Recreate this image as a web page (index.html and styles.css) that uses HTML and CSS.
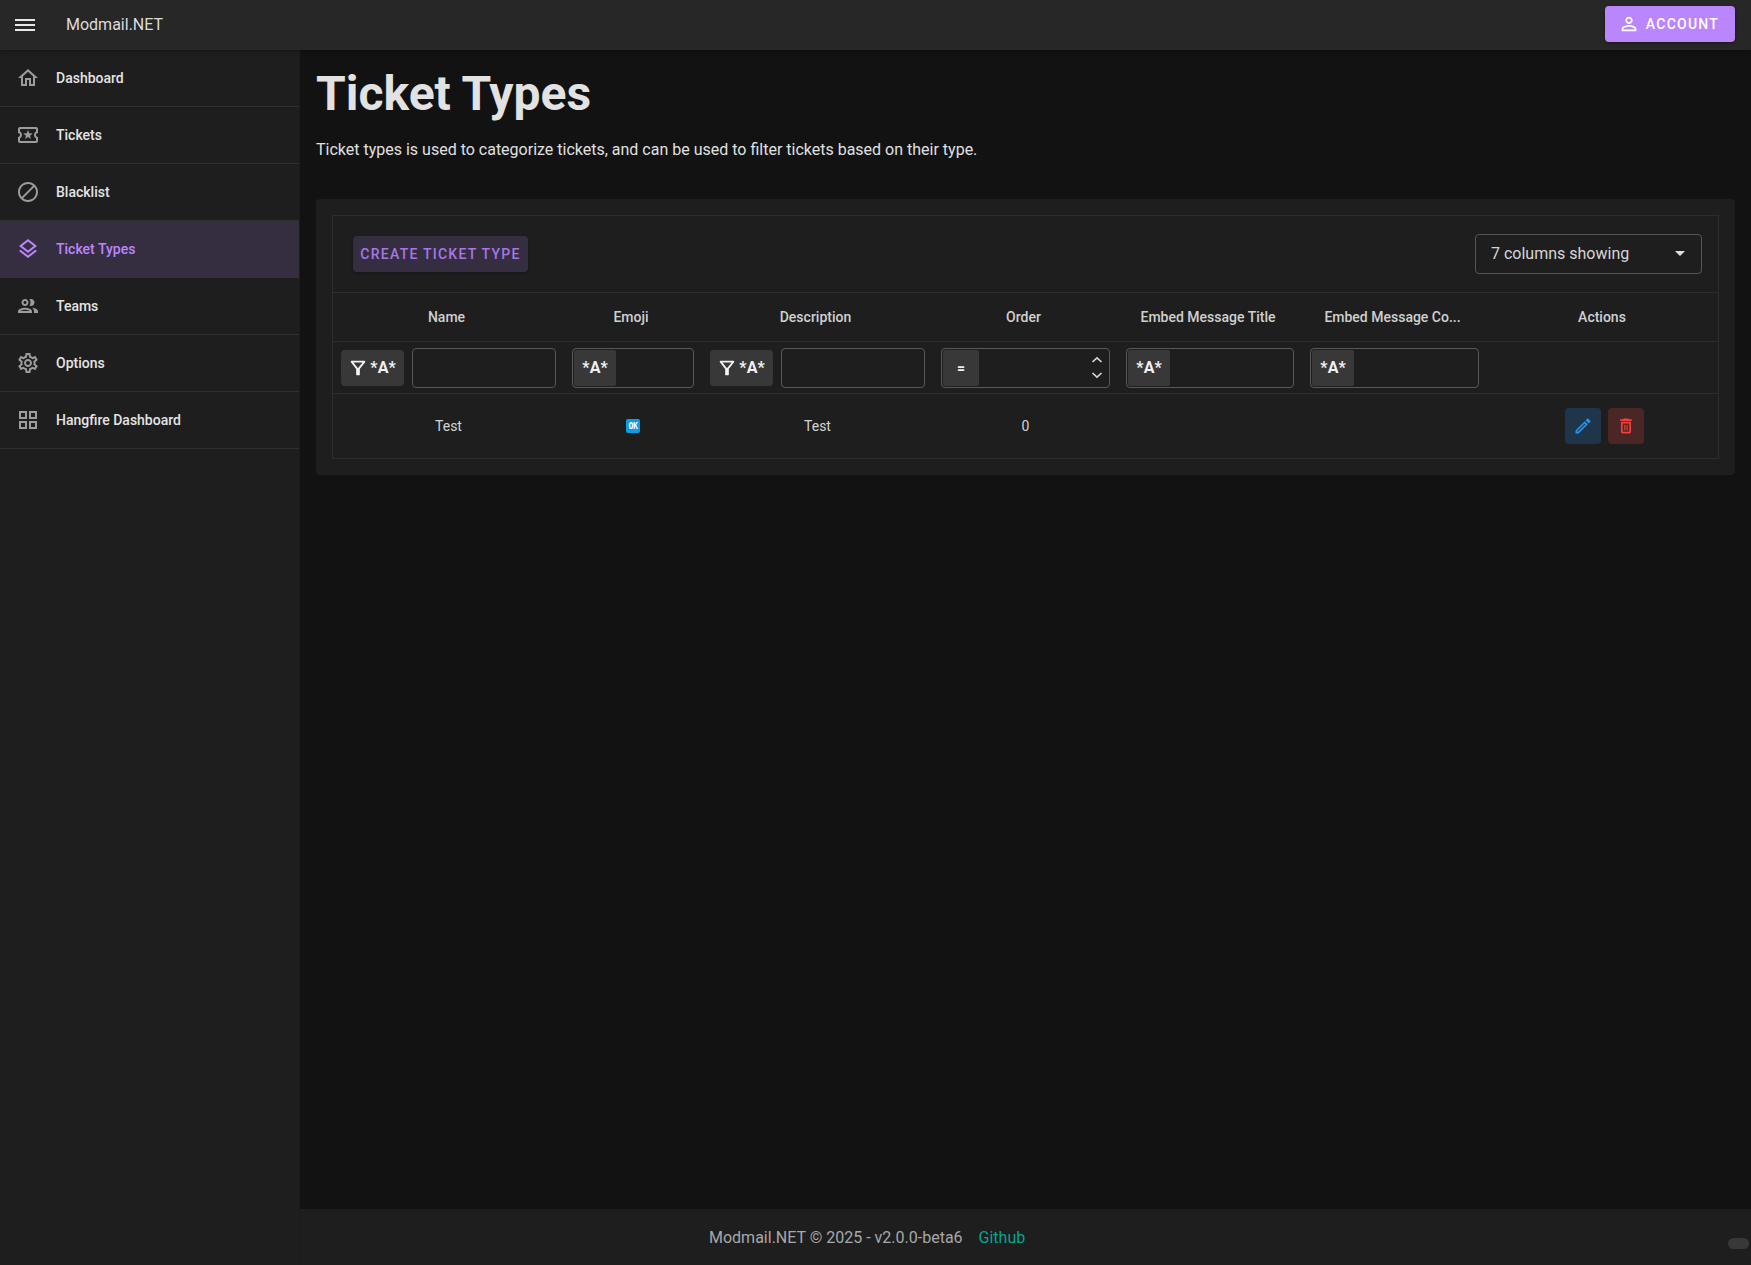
FILE: index.html
```html
<!DOCTYPE html>
<html lang="en">
<head>
<meta charset="utf-8">
<title>Ticket Types - Modmail.NET</title>
<link rel="stylesheet" href="styles.css">
</head>
<body>
<header class="appbar">
  <svg class="menu-icon" viewBox="0 0 20 12" aria-hidden="true"><path d="M0 0h20v2H0zM0 5h20v2H0zM0 10h20v2H0z"/></svg>
  <span class="brand">Modmail.NET</span>
  <a class="account-btn">
    <svg class="account-icon" viewBox="0 0 24 24"><path d="M12 5.9c1.16 0 2.1.94 2.1 2.1s-.94 2.1-2.1 2.1S9.9 9.16 9.9 8s.94-2.1 2.1-2.1m0 9c2.97 0 6.1 1.46 6.1 2.1v1.1H5.9V17c0-.64 3.13-2.1 6.1-2.1M12 4C9.79 4 8 5.79 8 8s1.79 4 4 4 4-1.79 4-4-1.79-4-4-4zm0 9c-2.67 0-8 1.34-8 4v3h16v-3c0-2.66-5.33-4-8-4z"/></svg>
    Account
  </a>
</header>
<div class="shell">
  <nav class="sidebar">
    <a class="nav-item"><svg class="nav-icon" viewBox="0 0 24 24"><path d="M12 5.69l5 4.5V18h-2v-6H9v6H7v-7.81l5-4.5M12 3L2 12h3v8h6v-6h2v6h6v-8h3L12 3z"/></svg>Dashboard</a>
    <a class="nav-item"><svg class="nav-icon" viewBox="0 0 24 24"><path d="M22 10V6c0-1.11-.9-2-2-2H4c-1.1 0-1.99.89-1.99 2v4c1.1 0 1.99.9 1.99 2s-.89 2-2 2v4c0 1.1.9 2 2 2h16c1.1 0 2-.9 2-2v-4c-1.1 0-2-.9-2-2s.9-2 2-2zm-2-1.46c-1.19.69-2 1.99-2 3.46s.81 2.77 2 3.46V18H4v-2.54c1.19-.69 2-1.99 2-3.46 0-1.48-.8-2.77-1.99-3.46L4 6h16v2.54zM9.07 16L12 14.12 14.93 16l-.89-3.36 2.69-2.2-3.47-.21L12 7l-1.27 3.22-3.47.21 2.69 2.2z"/></svg>Tickets</a>
    <a class="nav-item"><svg class="nav-icon" viewBox="0 0 24 24"><path d="M12 2C6.48 2 2 6.48 2 12s4.48 10 10 10 10-4.48 10-10S17.52 2 12 2zM4 12c0-4.42 3.58-8 8-8 1.85 0 3.55.63 4.9 1.69L5.69 16.9C4.63 15.55 4 13.85 4 12zm8 8c-1.85 0-3.55-.63-4.9-1.69L18.31 7.1C19.37 8.45 20 10.15 20 12c0 4.42-3.58 8-8 8z"/></svg>Blacklist</a>
    <a class="nav-item nav-item-active"><svg class="nav-icon" viewBox="0 0 24 24"><path d="M11.99 18.54l-7.37-5.73L3 14.07l9 7 9-7-1.63-1.27zM12 16l7.36-5.73L21 9l-9-7-9 7 1.63 1.27L12 16zm0-11.47L17.74 9 12 13.47 6.26 9 12 4.53z"/></svg>Ticket Types</a>
    <a class="nav-item"><svg class="nav-icon" viewBox="0 0 24 24"><path d="M9 13.75c-2.34 0-7 1.17-7 3.5V19h14v-1.75c0-2.33-4.66-3.5-7-3.5zM4.34 17c.84-.58 2.87-1.25 4.66-1.25s3.82.67 4.66 1.25H4.34zM9 12c1.93 0 3.5-1.57 3.5-3.5S10.93 5 9 5 5.5 6.57 5.5 8.5 7.07 12 9 12zm0-5c.83 0 1.5.67 1.5 1.5S9.83 10 9 10s-1.5-.67-1.5-1.5S8.17 7 9 7zm7.04 6.81c1.16.84 1.96 1.96 1.96 3.44V19h4v-1.75c0-2.02-3.5-3.17-5.96-3.44zM15 12c1.93 0 3.5-1.57 3.5-3.5S16.93 5 15 5c-.54 0-1.04.13-1.5.35.63.89 1 1.98 1 3.15s-.37 2.26-1 3.15c.46.22.96.35 1.5.35z"/></svg>Teams</a>
    <a class="nav-item"><svg class="nav-icon" viewBox="0 0 24 24"><path d="M19.43 12.98c.04-.32.07-.64.07-.98 0-.34-.03-.66-.07-.98l2.11-1.65c.19-.15.24-.42.12-.64l-2-3.46c-.09-.16-.26-.25-.44-.25-.06 0-.12.01-.17.03l-2.49 1c-.52-.4-1.08-.73-1.69-.98l-.38-2.65C14.46 2.18 14.25 2 14 2h-4c-.25 0-.46.18-.49.42l-.38 2.65c-.61.25-1.17.59-1.69.98l-2.49-1c-.06-.02-.12-.03-.18-.03-.17 0-.34.09-.43.25l-2 3.46c-.13.22-.07.49.12.64l2.11 1.65c-.04.32-.07.65-.07.98 0 .33.03.66.07.98l-2.11 1.65c-.19.15-.24.42-.12.64l2 3.46c.09.16.26.25.44.25.06 0 .12-.01.17-.03l2.49-1c.52.4 1.08.73 1.69.98l.38 2.65c.03.24.24.42.49.42h4c.25 0 .46-.18.49-.42l.38-2.65c.61-.25 1.17-.59 1.69-.98l2.49 1c.06.02.12.03.18.03.17 0 .34-.09.43-.25l2-3.46c.12-.22.07-.49-.12-.64l-2.11-1.65zm-1.98-1.71c.04.31.05.52.05.73 0 .21-.02.43-.05.73l-.14 1.13.89.7 1.08.84-.7 1.21-1.27-.51-1.04-.42-.9.68c-.43.32-.84.56-1.25.73l-1.06.43-.16 1.13-.2 1.35h-1.4l-.19-1.35-.16-1.13-1.06-.43c-.43-.18-.83-.41-1.23-.71l-.91-.7-1.06.43-1.27.51-.7-1.21 1.08-.84.89-.7-.14-1.13c-.03-.31-.05-.54-.05-.74s.02-.43.05-.73l.14-1.13-.89-.7-1.08-.84.7-1.21 1.27.51 1.04.42.9-.68c.43-.32.84-.56 1.25-.73l1.06-.43.16-1.13.2-1.35h1.39l.19 1.35.16 1.13 1.06.43c.43.18.83.41 1.23.71l.91.7 1.06-.43 1.27-.51.7 1.21-1.07.85-.89.7.14 1.13zM12 8c-2.21 0-4 1.79-4 4s1.79 4 4 4 4-1.79 4-4-1.79-4-4-4zm0 6c-1.1 0-2-.9-2-2s.9-2 2-2 2 .9 2 2-.9 2-2 2z"/></svg>Options</a>
    <a class="nav-item"><svg class="nav-icon" viewBox="0 0 24 24"><path d="M3 3v8h8V3H3zm6 6H5V5h4v4zm-6 4v8h8v-8H3zm6 6H5v-4h4v4zm4-16v8h8V3h-8zm6 6h-4V5h4v4zm-6 4v8h8v-8h-8zm6 6h-4v-4h4v4z"/></svg>Hangfire Dashboard</a>
  </nav>
  <div class="main">
    <main class="content">
      <h1 class="page-title">Ticket Types</h1>
      <p class="page-lead">Ticket types is used to categorize tickets, and can be used to filter tickets based on their type.</p>
      <section class="card">
        <div class="grid">
          <div class="toolbar">
            <button class="create-btn">Create Ticket Type</button>
            <div class="column-select">7 columns showing<span class="caret"></span></div>
          </div>
          <div class="row row-head">
            <div class="th">Name</div>
            <div class="th">Emoji</div>
            <div class="th">Description</div>
            <div class="th">Order</div>
            <div class="th">Embed Message Title</div>
            <div class="th">Embed Message Co...</div>
            <div class="th th-actions">Actions</div>
          </div>
          <div class="row row-filter">
            <div class="fc">
              <span class="filter-btn"><svg class="funnel" viewBox="0 0 24 24"><path fill-rule="evenodd" d="M7,6h10l-5.01,6.3L7,6z M4.25,5.61C6.27,8.2,10,13,10,13v6c0,.55.45,1,1,1h2c.55,0,1-.45,1-1v-6c0,0,3.72-4.8,5.75-7.39C20.26,4.95,19.79,4,18.95,4H5.04C4.21,4,3.74,4.95,4.25,5.61z"/></svg>*A*</span>
              <span class="field"></span>
            </div>
            <div class="fc"><span class="field"><span class="adorn">*A*</span></span></div>
            <div class="fc">
              <span class="filter-btn"><svg class="funnel" viewBox="0 0 24 24"><path fill-rule="evenodd" d="M7,6h10l-5.01,6.3L7,6z M4.25,5.61C6.27,8.2,10,13,10,13v6c0,.55.45,1,1,1h2c.55,0,1-.45,1-1v-6c0,0,3.72-4.8,5.75-7.39C20.26,4.95,19.79,4,18.95,4H5.04C4.21,4,3.74,4.95,4.25,5.61z"/></svg>*A*</span>
              <span class="field"></span>
            </div>
            <div class="fc">
              <span class="field">
                <span class="adorn adorn-eq">=</span>
                <span class="spin">
                  <svg viewBox="0 0 12 8"><path d="M1.5 6L6 1.8 10.5 6" /></svg>
                  <svg viewBox="0 0 12 8"><path d="M1.5 2L6 6.2 10.5 2" /></svg>
                </span>
              </span>
            </div>
            <div class="fc"><span class="field"><span class="adorn">*A*</span></span></div>
            <div class="fc"><span class="field"><span class="adorn">*A*</span></span></div>
            <div class="fc"></div>
          </div>
          <div class="row row-data">
            <div class="td">Test</div>
            <div class="td"><span class="emoji-ok">OK</span></div>
            <div class="td">Test</div>
            <div class="td">0</div>
            <div class="td"></div>
            <div class="td"></div>
            <div class="td td-actions">
              <button class="icon-btn icon-btn-edit"><svg viewBox="0 0 24 24"><path d="M14.06 9.02l.92.92L5.92 19H5v-.92l9.06-9.06M17.66 3c-.25 0-.51.1-.7.29l-1.83 1.83 3.75 3.75 1.83-1.83c.39-.39.39-1.02 0-1.41l-2.34-2.34c-.2-.2-.45-.29-.71-.29zm-3.6 3.19L3 17.25V21h3.75L17.81 9.94l-3.75-3.75z"/></svg></button>
              <button class="icon-btn icon-btn-delete"><svg viewBox="0 0 24 24"><path d="M6 19c0 1.1.9 2 2 2h8c1.1 0 2-.9 2-2V7H6v12zM8 9h8v10H8V9zm7.5-5l-1-1h-5l-1 1H5v2h14V4h-3.5zM10 10.5h1.3v7H10zM12.7 10.5H14v7h-1.3z"/></svg></button>
            </div>
          </div>
        </div>
      </section>
    </main>
    <footer class="footer">
      <span>Modmail.NET © 2025 - v2.0.0-beta6</span>
      <a class="footer-link">Github</a>
    </footer>
  </div>
</div>
<span class="corner-pill"></span>
</body>
</html>
```

FILE: styles.css
```css
* { box-sizing: border-box; }

html, body {
  margin: 0;
  height: 100%;
}

body {
  display: flex;
  flex-direction: column;
  height: 1265px;
  overflow: hidden;
  background: #121212;
  color: #e0e0e0;
  font-family: Roboto, "Liberation Sans", sans-serif;
  font-size: 14px;
}

/* App bar */
.appbar {
  position: relative;
  z-index: 2;
  flex: 0 0 50px;
  display: flex;
  align-items: center;
  padding: 0 16px 0 15px;
  background: #272727;
  box-shadow: 0 1px 4px rgba(0, 0, 0, 0.35);
}

.menu-icon {
  width: 20px;
  height: 12px;
  fill: #e8e8e8;
}

.brand {
  margin-left: 31px;
  margin-top: -2px;
  font-size: 16px;
  color: #dcdcdc;
}

.account-btn {
  margin-left: auto;
  margin-top: -2px;
  width: 130px;
  height: 36px;
  display: flex;
  align-items: center;
  justify-content: center;
  gap: 6px;
  background: #bb86fc;
  color: #fff;
  border-radius: 4px;
  font-size: 14px;
  font-weight: 500;
  letter-spacing: 1.25px;
  text-transform: uppercase;
  box-shadow: 0 1px 3px rgba(0, 0, 0, 0.4);
}

.account-icon {
  width: 22px;
  height: 22px;
  fill: #fff;
  margin-left: -3px;
}

/* Shell */
.shell {
  flex: 1;
  display: flex;
  min-height: 0;
}

.sidebar {
  flex: 0 0 300px;
  background: #1e1e1e;
  border-right: 1px solid #1c1c1c;
}

.nav-item {
  height: 57px;
  display: flex;
  align-items: center;
  gap: 16px;
  padding-left: 16px;
  padding-bottom: 1px;
  border-bottom: 1px solid #303030;
  font-weight: 500;
  color: #e4e4e4;
}

.nav-icon {
  width: 24px;
  height: 24px;
  fill: #9c9c9c;
}

.nav-item-active {
  background: #352e40;
  border-bottom-color: #352e40;
  color: #bb86fc;
}

.nav-item-active .nav-icon {
  fill: #bb86fc;
}

/* Main */
.main {
  flex: 1;
  min-width: 0;
  display: flex;
  flex-direction: column;
}

.content {
  flex: 1;
  padding: 16px;
}

.page-title {
  margin: 0 0 16px;
  font-size: 48px;
  line-height: 56px;
  font-weight: 700;
  color: #e2e2e2;
}

.page-lead {
  margin: 0 0 37px;
  font-size: 16px;
  line-height: 24px;
  color: #e0e0e0;
}

.card {
  padding: 16px;
  background: #1e1e1e;
  border-radius: 4px;
}

.grid {
  border: 1px solid #2d2d2d;
}

.toolbar {
  height: 77px;
  display: flex;
  align-items: center;
  justify-content: space-between;
  padding: 0 16px 1px 20px;
  border-bottom: 1px solid #2d2d2d;
}

.create-btn {
  width: 175px;
  height: 36px;
  padding: 0;
  border: 0;
  border-radius: 4px;
  background: #352e40;
  color: #a876e8;
  font: 500 14px Roboto, "Liberation Sans", sans-serif;
  letter-spacing: 1.25px;
  text-transform: uppercase;
  box-shadow: 0 1px 3px rgba(0, 0, 0, 0.3);
}

.column-select {
  width: 227px;
  height: 40px;
  display: flex;
  align-items: center;
  justify-content: space-between;
  padding: 0 16px 0 15px;
  border: 1px solid #555;
  border-radius: 4px;
  font-size: 16px;
  color: #d6d6d6;
}

.caret {
  width: 0;
  height: 0;
  border-left: 5px solid transparent;
  border-right: 5px solid transparent;
  border-top: 5px solid #e0e0e0;
}

.row {
  display: grid;
  grid-template-columns: 231px 138px 231px 185px 184px 185px 231px;
  border-bottom: 1px solid #2d2d2d;
}

.row-head { height: 49px; }
.row-filter { height: 52px; }
.row-data { height: 64px; border-bottom: 0; }

.th {
  display: flex;
  align-items: center;
  justify-content: center;
  padding-right: 4px;
  font-weight: 500;
  color: #d0d0d0;
}

.th-actions { padding-right: 1px; }

.fc {
  display: flex;
  align-items: center;
  gap: 8px;
  padding: 0 8px;
}

.filter-btn {
  flex: 0 0 63px;
  height: 36px;
  display: flex;
  align-items: center;
  justify-content: center;
  gap: 1px;
  background: #383838;
  border-radius: 4px;
  color: #f0f0f0;
  font-size: 16px;
  font-weight: 700;
}

.funnel {
  width: 22px;
  height: 22px;
  fill: #f4f4f4;
  margin-left: -2px;
}

.field {
  flex: 1;
  min-width: 0;
  height: 40px;
  display: flex;
  align-items: center;
  justify-content: space-between;
  padding: 0 1px;
  border: 1px solid #585858;
  border-radius: 4px;
}

.adorn {
  width: 42px;
  height: 36px;
  display: flex;
  align-items: center;
  justify-content: center;
  background: #383838;
  border-radius: 2px;
  color: #f0f0f0;
  font-size: 16px;
  font-weight: 700;
}

.adorn-eq {
  width: 36px;
  font-size: 14px;
}

.spin {
  display: flex;
  flex-direction: column;
  gap: 7px;
  padding-right: 5px;
}

.spin svg {
  display: block;
  width: 12px;
  height: 8px;
  fill: none;
  stroke: #d8d8d8;
  stroke-width: 1.6;
}

.td {
  display: flex;
  align-items: center;
  justify-content: center;
  color: #d4d4d4;
}

.td-actions {
  gap: 7px;
  padding-left: 4px;
}

.emoji-ok {
  width: 14px;
  height: 14px;
  display: flex;
  align-items: center;
  justify-content: center;
  background: #0b9de6;
  border-radius: 2px;
  color: #fff;
  font-family: "DejaVu Sans Mono", monospace;
  font-size: 8px;
  font-weight: 700;
  letter-spacing: -0.3px;
}

.icon-btn {
  width: 36px;
  height: 36px;
  padding: 0;
  border: 0;
  border-radius: 4px;
  display: flex;
  align-items: center;
  justify-content: center;
}

.icon-btn svg {
  width: 20px;
  height: 20px;
}

.icon-btn-edit { background: #1f3549; }
.icon-btn-edit svg { fill: #2196f3; }
.icon-btn-delete { background: #4a2626; }
.icon-btn-delete svg { fill: #f44336; }

/* Footer */
.footer {
  flex: 0 0 56px;
  display: flex;
  align-items: center;
  gap: 16px;
  padding-left: 409px;
  background: #1e1e1e;
  font-size: 16px;
  color: #a8a8a8;
}

.footer-link { color: #03a58f; }

.corner-pill {
  position: absolute;
  right: 2px;
  top: 1238px;
  width: 21px;
  height: 11px;
  background: #383838;
  border-radius: 6px;
}
```
